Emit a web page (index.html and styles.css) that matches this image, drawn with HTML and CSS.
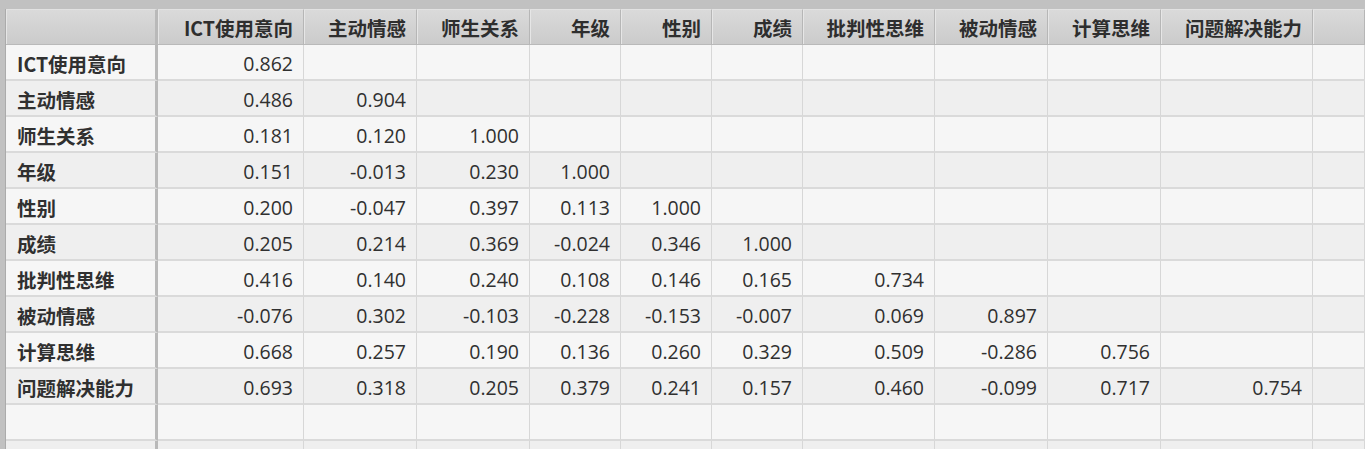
FILE: index.html
```html
<!DOCTYPE html>
<html lang="zh">
<head>
<meta charset="utf-8">
<title>相关矩阵</title>
<link rel="stylesheet" href="styles.css">
</head>
<body>
<div class="frame">
  <div class="grid">
    <div class="row head">
      <div class="hc corner"></div>
      <div class="hc">ICT使用意向</div>
      <div class="hc">主动情感</div>
      <div class="hc">师生关系</div>
      <div class="hc">年级</div>
      <div class="hc">性别</div>
      <div class="hc">成绩</div>
      <div class="hc">批判性思维</div>
      <div class="hc">被动情感</div>
      <div class="hc">计算思维</div>
      <div class="hc">问题解决能力</div>
      <div class="hc"></div>
    </div>
    <div class="row odd">
      <div class="lab">ICT使用意向</div>
      <div class="c">0.862</div><div class="c"></div><div class="c"></div><div class="c"></div><div class="c"></div><div class="c"></div><div class="c"></div><div class="c"></div><div class="c"></div><div class="c"></div><div class="c"></div>
    </div>
    <div class="row even">
      <div class="lab">主动情感</div>
      <div class="c">0.486</div><div class="c">0.904</div><div class="c"></div><div class="c"></div><div class="c"></div><div class="c"></div><div class="c"></div><div class="c"></div><div class="c"></div><div class="c"></div><div class="c"></div>
    </div>
    <div class="row odd">
      <div class="lab">师生关系</div>
      <div class="c">0.181</div><div class="c">0.120</div><div class="c">1.000</div><div class="c"></div><div class="c"></div><div class="c"></div><div class="c"></div><div class="c"></div><div class="c"></div><div class="c"></div><div class="c"></div>
    </div>
    <div class="row even">
      <div class="lab">年级</div>
      <div class="c">0.151</div><div class="c">-0.013</div><div class="c">0.230</div><div class="c">1.000</div><div class="c"></div><div class="c"></div><div class="c"></div><div class="c"></div><div class="c"></div><div class="c"></div><div class="c"></div>
    </div>
    <div class="row odd">
      <div class="lab">性别</div>
      <div class="c">0.200</div><div class="c">-0.047</div><div class="c">0.397</div><div class="c">0.113</div><div class="c">1.000</div><div class="c"></div><div class="c"></div><div class="c"></div><div class="c"></div><div class="c"></div><div class="c"></div>
    </div>
    <div class="row even">
      <div class="lab">成绩</div>
      <div class="c">0.205</div><div class="c">0.214</div><div class="c">0.369</div><div class="c">-0.024</div><div class="c">0.346</div><div class="c">1.000</div><div class="c"></div><div class="c"></div><div class="c"></div><div class="c"></div><div class="c"></div>
    </div>
    <div class="row odd">
      <div class="lab">批判性思维</div>
      <div class="c">0.416</div><div class="c">0.140</div><div class="c">0.240</div><div class="c">0.108</div><div class="c">0.146</div><div class="c">0.165</div><div class="c">0.734</div><div class="c"></div><div class="c"></div><div class="c"></div><div class="c"></div>
    </div>
    <div class="row even">
      <div class="lab">被动情感</div>
      <div class="c">-0.076</div><div class="c">0.302</div><div class="c">-0.103</div><div class="c">-0.228</div><div class="c">-0.153</div><div class="c">-0.007</div><div class="c">0.069</div><div class="c">0.897</div><div class="c"></div><div class="c"></div><div class="c"></div>
    </div>
    <div class="row odd">
      <div class="lab">计算思维</div>
      <div class="c">0.668</div><div class="c">0.257</div><div class="c">0.190</div><div class="c">0.136</div><div class="c">0.260</div><div class="c">0.329</div><div class="c">0.509</div><div class="c">-0.286</div><div class="c">0.756</div><div class="c"></div><div class="c"></div>
    </div>
    <div class="row even">
      <div class="lab">问题解决能力</div>
      <div class="c">0.693</div><div class="c">0.318</div><div class="c">0.205</div><div class="c">0.379</div><div class="c">0.241</div><div class="c">0.157</div><div class="c">0.460</div><div class="c">-0.099</div><div class="c">0.717</div><div class="c">0.754</div><div class="c"></div>
    </div>
    <div class="row odd">
      <div class="lab"></div>
      <div class="c"></div><div class="c"></div><div class="c"></div><div class="c"></div><div class="c"></div><div class="c"></div><div class="c"></div><div class="c"></div><div class="c"></div><div class="c"></div><div class="c"></div>
    </div>
    <div class="row even">
      <div class="lab"></div>
      <div class="c"></div><div class="c"></div><div class="c"></div><div class="c"></div><div class="c"></div><div class="c"></div><div class="c"></div><div class="c"></div><div class="c"></div><div class="c"></div><div class="c"></div>
    </div>
  </div>
</div>
</body>
</html>
```

FILE: styles.css
```css
html, body {
  margin: 0;
  padding: 0;
  background: #c0c0c0;
  overflow: hidden;
}

.frame {
  width: 1365px;
  height: 449px;
  overflow: hidden;
  background: #c1c1c1;
  padding: 9px 0 0 5px;
  box-sizing: border-box;
}

.grid {
  border-left: 1px solid #ababab;
  background: #f5f5f5;
}

.row {
  display: grid;
  grid-template-columns: 152px 146px 113px 113px 91px 91px 91px 132px 113px 113px 152px 1fr;
  height: 36px;
}

.hc {
  box-sizing: border-box;
  background: linear-gradient(#dadada, #cbcbcb);
  border-right: 1px solid #b6b6b6;
  border-top: 1px solid #e2e2e2;
  border-bottom: 1px solid #b9b9b9;
  box-shadow: inset 1px 0 0 #e6e6e6;
  display: flex;
  align-items: center;
  justify-content: flex-end;
  padding: 1px 10px 0 0;
  font-family: "Noto Sans CJK SC", "Noto Sans", sans-serif;
  font-weight: 700;
  font-size: 19.5px;
  color: #2e2e2e;
  white-space: nowrap;
}

.hc.corner {
  border-right: 3px solid #b9b9b9;
}

.odd { background: #f6f6f6; }
.even { background: #efefef; }

.lab, .c {
  box-sizing: border-box;
  border-bottom: 2px solid #dadada;
  border-right: 1px solid #d7d7d7;
  display: flex;
  align-items: center;
  white-space: nowrap;
  color: #303030;
}

.lab {
  border-right: 3px solid #b9b9b9;
  padding: 2px 0 0 11px;
  font-family: "Noto Sans CJK SC", "Noto Sans", sans-serif;
  font-weight: 700;
  font-size: 19.5px;
}

.c {
  justify-content: flex-end;
  padding: 3px 10px 0 0;
  font-family: "Open Sans", "Noto Sans", sans-serif;
  font-size: 19.5px;
}
```
